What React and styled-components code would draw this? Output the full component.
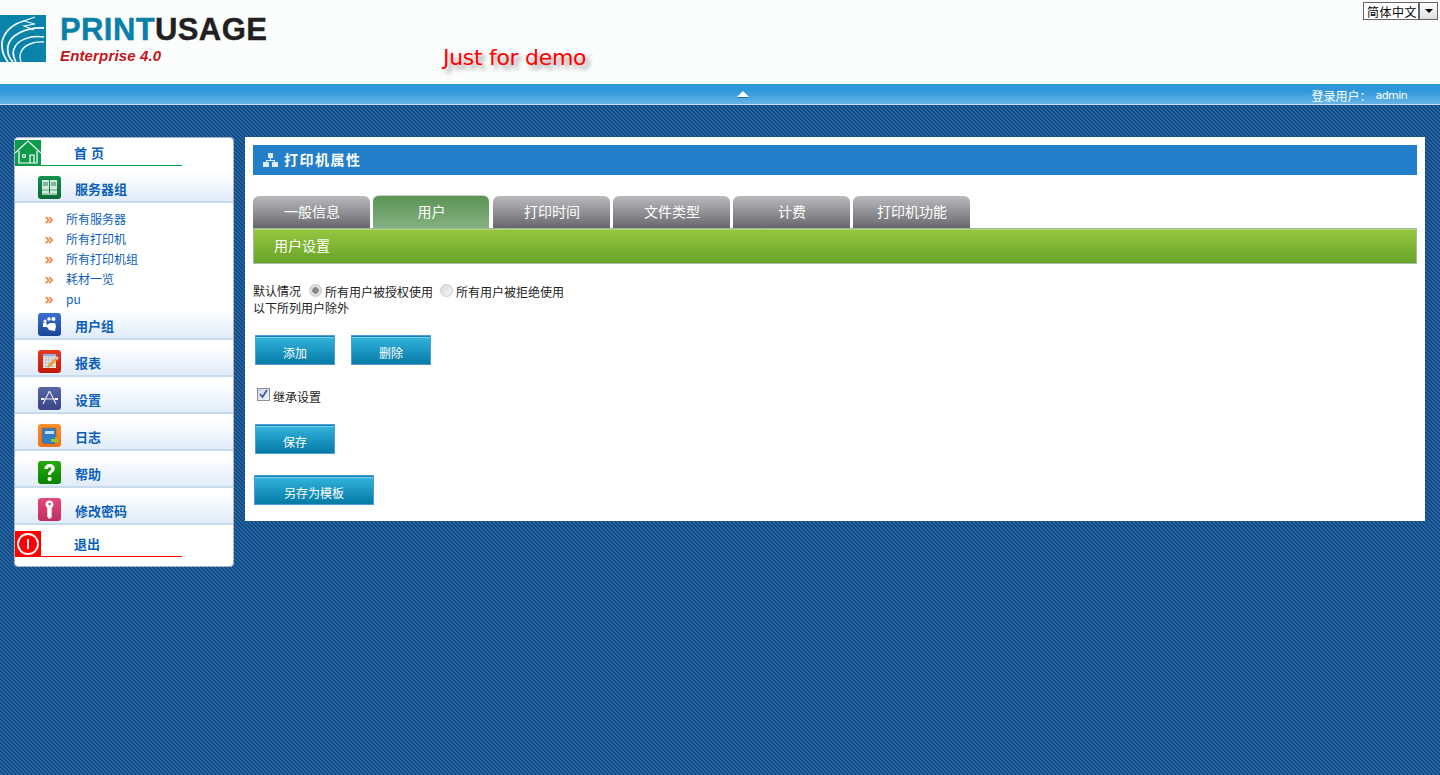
import React from "react";
import styled, { createGlobalStyle } from "styled-components";

const Global = createGlobalStyle`
  html, body { margin: 0; padding: 0; height: 100%; }
  body {
    min-height: 775px;
    overflow: hidden;
    font-family: "Noto Sans CJK SC", "Liberation Sans", sans-serif;
    font-size: 12px;
    background-color: #14508c;
    background-image: linear-gradient(45deg, #0f4a86 25%, #2a659f 25%, #2a659f 50%, #0f4a86 50%, #0f4a86 75%, #2a659f 75%);
    background-size: 4px 4px;
  }
`;

const Page = styled.div`width: 1440px; height: 775px; overflow: hidden;`;

const Header = styled.header`
  position: relative;
  height: 84px;
  background: #fbfdfc;
  display: flex;
`;
const LogoMark = styled.svg`width: 46px; height: 47px; margin-top: 15px; flex: none;`;
const LogoText = styled.div`margin: 11px 0 0 14px; width: 383px; flex: none;`;
const Brand = styled.div`
  font: bold 31px/38px "Liberation Sans", sans-serif;
  letter-spacing: 0.4px;
  -webkit-text-stroke: 0.4px currentColor;
  color: #231f20;
  span { color: #0a7fa8; }
`;
const Edition = styled.div`
  font: italic bold 15px/17px "Liberation Sans", sans-serif;
  letter-spacing: 0.15px;
  color: #c4151b;
  margin-top: -2px;
`;
const Demo = styled.div`
  margin-top: 44px;
  font: 22px/28px "DejaVu Sans", sans-serif;
  letter-spacing: -0.3px;
  color: #ff0000;
  text-shadow: 4px 4px 4px #999;
`;
const LangSelect = styled.div`
  position: absolute;
  top: 2px; right: 2px;
  width: 75px; height: 18px;
  box-sizing: border-box;
  border: 1px solid #666;
  background: #fff;
  display: flex;
  font-size: 12px;
  letter-spacing: 0.5px;
  line-height: 17px;
  color: #000;
  padding-left: 3px;
  justify-content: space-between;
  white-space: nowrap;
`;
const LangArrow = styled.span`
  width: 17px;
  border-left: 2px solid #666;
  background: linear-gradient(#fff, #ddd);
  display: flex; align-items: center; justify-content: center;
  &::after { content: ""; border: 4px solid transparent; border-top: 4px solid #000; border-bottom: 0; }
`;

const TopBar = styled.div`
  position: relative;
  height: 21px;
  box-sizing: border-box;
  background: linear-gradient(#2e97da 0, #2e97da 30%, #66b3e6 95%, #c3def2 95%);
  display: flex;
  align-items: center;
  justify-content: flex-end;
  padding-right: 33px;
  color: #fff;
  font-size: 12px;
`;
const Collapse = styled.span`
  position: absolute; left: 737px; top: 7px;
  border: 6px solid transparent;
  border-top: 0;
  border-bottom: 6px solid #fff;
  filter: drop-shadow(0 1px 0 #2a6d9c);
`;
const Admin = styled.span`font-family: "DejaVu Sans", sans-serif; font-size: 11px; margin-left: 4px; letter-spacing: -.6px;`;
const UserInfo = styled.div`margin-top: 3px; line-height: 16px; display: flex;`;

const Body = styled.div`
  display: flex;
  align-items: flex-start;
  gap: 11px;
  padding: 32px 15px 0 14px;
`;

const Sidebar = styled.nav`
  width: 220px;
  height: 430px;
  box-sizing: border-box;
  flex: none;
  background: #fff;
  border: 1px solid #a9b4bd;
  border-radius: 4px;
  padding-top: 2px;
`;
const Feature = styled.div`
  display: flex;
  height: ${p => p.$h}px;
  margin-top: ${p => p.$mt || 0}px;
`;
const FeatureIcon = styled.div`
  width: 26px; height: 26px; flex: none;
  background: ${p => p.$c};
  display: flex; align-items: center; justify-content: center;
`;
const FeatureLabel = styled.div`
  width: 141px; height: 26px;
  box-sizing: border-box;
  border-bottom: 1px solid ${p => p.$c};
  padding-left: 33px;
  font-weight: 700;
  font-size: 13px;
  line-height: 25px;
  color: #0c5fb8;
  letter-spacing: ${p => p.$ls || 0}px;
  white-space: pre;
`;
const Group = styled.div`
  margin-top: 6px;
  height: 31px;
  box-sizing: border-box;
  background: linear-gradient(#fff, #e0ecf9);
  border-bottom: 2px solid #c6dcec;
  display: flex;
  align-items: flex-start;
  padding: 4px 0 0 23px;
`;
const GroupIcon = styled.div`
  width: 23px; height: 23px; flex: none;
  border-radius: 3px;
  overflow: hidden;
  background: linear-gradient(${p => p.$a}, ${p => p.$b});
  svg { display: block; }
`;
const GroupLabel = styled.div`
  margin-left: 14px;
  padding-top: 2px;
  font-size: 13px;
  font-weight: 700;
  line-height: 22px;
  color: #0c5fb8;
`;
const SubList = styled.ul`
  list-style: none;
  margin: 0;
  padding: 6px 0 0 30px;
  height: 100px;
  box-sizing: border-box;
`;
const SubItem = styled.li`
  height: 20px;
  display: flex;
  align-items: center;
  color: #0c5fb8;
  line-height: 20px;
  font-size: 12px;
  &::before {
    content: "»";
    width: 21px;
    color: #f26b1d;
    font: 15px/18px "Liberation Sans", sans-serif;
    -webkit-text-stroke: 0.3px #f26b1d;
  }
`;

const Panel = styled.main`
  width: 1180px;
  height: 384px;
  box-sizing: border-box;
  flex: none;
  background: #fff;
  padding: 8px 8px 0;
`;
const Title = styled.h1`
  margin: 0;
  height: 30px;
  box-sizing: border-box;
  background: #237fc9;
  color: #fff;
  font-size: 14px;
  font-weight: 700;
  line-height: 28px;
  letter-spacing: 1.5px;
  display: flex;
  align-items: center;
  gap: 6px;
  padding: 0 0 2px 10px;
  svg { margin-top: 2px; }
`;
const Tabs = styled.div`
  display: flex;
  gap: 3px;
  margin-top: 20px;
  height: 33px;
  align-items: flex-end;
`;
const Tab = styled.div`
  width: ${p => (p.$active ? 116 : 117)}px;
  margin-right: ${p => (p.$active ? 1 : 0)}px;
  height: ${p => (p.$active ? 33 : 32)}px;
  box-sizing: border-box;
  border-radius: 6px 6px 0 0;
  text-align: center;
  color: #fff;
  font-size: 14px;
  line-height: 30px;
  padding-left: 1px;
  background: ${p => p.$active ? "linear-gradient(#5b9455, #85b182)" : "linear-gradient(#b9b9be, #68686c)"};
  border-top: ${p => p.$active ? "1px solid #c8d2c6" : "0"};
`;
const SubBar = styled.div`
  height: 36px;
  box-sizing: border-box;
  border: 1px solid #a9b5ae;
  border-top: 1px solid #9db5a0;
  box-shadow: inset 0 1px 0 #b6d96f;
  background: linear-gradient(#97c63f, #68a428);
  color: #fff;
  font-size: 14px;
  line-height: 32px;
  padding-left: 20px;
`;
const Form = styled.div`padding-top: 17px;`;
const DefaultRow = styled.div`
  display: flex;
  align-items: center;
  height: 18px;
  line-height: 17px;
  color: #222;
  font-size: 12px;
`;
const Radio = styled.span`
  width: 13px; height: 13px;
  border-radius: 50%;
  margin: 0 3px 0 ${p => p.$ml}px;
  box-sizing: border-box;
  border: 1px solid #c9c9c9;
  background: ${p => p.$on
    ? "radial-gradient(circle, #888 0 3px, #e4e4e4 3.5px, #cfcfcf 100%)"
    : "linear-gradient(135deg, #d8d8d8, #f6f6f6)"};
`;
const RadioText = styled.span`padding-top: 3px;`;
const Note = styled.div`line-height: 17px; color: #222; font-size: 12px;`;
const ButtonRow = styled.div`
  display: flex;
  gap: 16px;
  padding-left: ${p => p.$pl}px;
  margin-top: ${p => p.$mt}px;
`;
const Button = styled.button`
  width: ${p => p.$w || 80}px;
  height: 30px;
  padding: 5px 0 0;
  box-sizing: border-box;
  border: 1px solid #4f9bdc;
  box-shadow: inset 0 1px 0 #0f83ad, inset 0 2px 0 #7fd2ee;
  background: linear-gradient(#35b6df, #047aa5);
  color: #fff;
  font: 12px/20px "Noto Sans CJK SC", sans-serif;
`;
const CheckRow = styled.div`
  display: flex;
  align-items: center;
  margin: 20px 0 0 4px;
  height: 18px;
  color: #222;
  gap: 3px;
`;
const CheckText = styled.span`padding-top: 5px;`;
const Check = styled.span`
  width: 13px; height: 13px;
  box-sizing: border-box;
  border: 1px solid #8f8f9d;
  background: linear-gradient(135deg, #d5d5e0, #f4f4f8);
  display: flex;
  svg { display: block; }
`;

const icons = {
  server: <svg width="23" height="23" viewBox="0 0 23 23"><path d="M4 4h7v13H4zM12 4h7v13h-7z" fill="#d6e8dc"/><path d="M5 7h5M5 9h5M13 7h5M13 9h5" stroke="#1d8a52"/><path d="M4 14h7M12 14h7" stroke="#4fa876"/><path d="M4 17h15v2H4z" fill="#9fc9ae"/></svg>,
  users: <svg width="23" height="23" viewBox="0 0 23 23"><g fill="#fff"><circle cx="7" cy="8" r="1.6"/><circle cx="11" cy="6" r="1.8"/><circle cx="15.5" cy="6" r="2"/><path d="M5 10l3-1 1 3 3-2 5 0 1 3-1 5-6-1-2-3-4 0z"/></g></svg>,
  report: <svg width="23" height="23" viewBox="0 0 23 23"><path d="M5 4h13v14H5z" fill="#f3efdc"/><path d="M5 7h13M5 10h13M5 13h13M5 16h13M8 4v14M11 4v14M14 4v14" stroke="#9bb6d6" strokeWidth=".7"/><path d="M5 4h13v2H5z" fill="#8fb2dd"/><path d="M9 18l1-3 8-8 2 2-8 8z" fill="#f0a030"/><path d="M17 8l2-2 2 2-2 2z" fill="#d9c0d0"/></svg>,
  settings: <svg width="23" height="23" viewBox="0 0 23 23"><path d="M11.5 4L5 17M11.5 4L18 17M4 12h15" stroke="#dfe4f2" strokeWidth="1.2" fill="none"/><path d="M3 11h3v2H3zM17 11h3v2h-3z" fill="#fff"/></svg>,
  log: <svg width="23" height="23" viewBox="0 0 23 23"><path d="M4 4h14v16H6l-2-2z" fill="#2f7fc8" stroke="#c75b10" strokeWidth=".6"/><path d="M7 7h9v3H7z" fill="#bfe0f4"/><path d="M13 15h4v-2l4 3.5-4 3.500v-2h-4z" fill="#9cc428"/></svg>,
  help: <svg width="23" height="23" viewBox="0 0 23 23"><path d="M6.500 8c0-3 2.300-5 5.200-5s5 1.800 5 4.400c0 2-1.100 3-2.400 4-1 .8-1.400 1.300-1.400 2.600H10c0-2.200.6-3.200 2-4.300.9-.7 1.300-1.200 1.300-2 0-.9-.7-1.500-1.700-1.500S9.900 6.900 9.800 8z" fill="#fff"/><circle cx="11.600" cy="18" r="2.100" fill="#fff"/></svg>,
  key: <svg width="23" height="23" viewBox="0 0 23 23"><path d="M11.500 2.500a4 4 0 0 1 2.200 7.300V19l-1.200 1.500h-2L9.300 19V9.800a4 4 0 0 1 2.200-7.300z" fill="#fff"/><circle cx="11.500" cy="6" r="1.200" fill="#d0396f"/></svg>,
};

const rows = [
  ["report", "#e83a22", "#c21a0a", "报表"],
  ["settings", "#5565a5", "#3a4488", "设置"],
  ["log", "#fb8f2c", "#f2701a", "日志"],
  ["help", "#22ab08", "#0d8200", "帮助"],
  ["key", "#e6487c", "#bf2f60", "修改密码"],
];

export default function App() {
  return (
    <Page>
      <Global />
      <Header>
        <LogoMark viewBox="0 0 46 47">
          <rect width="46" height="47" fill="#0a83ab" />
          <path d="M35 2L24 6l11 3-11 2 10 4" fill="none" stroke="#eef8fb" strokeWidth="1.2" />
          <path d="M24 6C12 9 3 18 2 28c-.5 7 2 14 6 19" fill="none" stroke="#f2fafc" strokeWidth="1.800" />
          <path d="M44 13C26 12 10 20 8 31c-1 6 1 12 5 16" fill="none" stroke="#f2fafc" strokeWidth="1.800" />
          <path d="M44 22C30 20 17 25 14 34c-2 5 0 9 2 13" fill="none" stroke="#f2fafc" strokeWidth="1.600" />
          <path d="M44 27C34 26 24 30 21 37c-2 4-1 7 0 10" fill="none" stroke="#f2fafc" strokeWidth="1.400" />
        </LogoMark>
        <LogoText>
          <Brand><span>PRINT</span>USAGE</Brand>
          <Edition>Enterprise 4.0</Edition>
        </LogoText>
        <Demo>Just for demo</Demo>
        <LangSelect>简体中文<LangArrow /></LangSelect>
      </Header>
      <TopBar>
        <Collapse />
        <UserInfo>登录用户：<Admin>admin</Admin></UserInfo>
      </TopBar>
      <Body>
        <Sidebar>
          <Feature $h={26} $mt={0}>
            <FeatureIcon $c="#0b9b4b">
              <svg width="26" height="26" viewBox="0 0 26 26" fill="none" stroke="#fff" strokeWidth="1.200"><path d="M0 13L13 1l13 12" /><path d="M4 11v12h18V11" /><path d="M15 23v-8h4v8" /><circle cx="9" cy="16" r="1.500" /></svg>
            </FeatureIcon>
            <FeatureLabel $c="#0b9b4b" $ls={0.5}>首 页</FeatureLabel>
          </Feature>
          <Group>
            <GroupIcon $a="#14904e" $b="#066a34">{icons.server}</GroupIcon>
            <GroupLabel>服务器组</GroupLabel>
          </Group>
          <SubList>
            <SubItem>所有服务器</SubItem>
            <SubItem>所有打印机</SubItem>
            <SubItem>所有打印机组</SubItem>
            <SubItem>耗材一览</SubItem>
            <SubItem>pu</SubItem>
          </SubList>
          <Group>
            <GroupIcon $a="#3a6fd0" $b="#1d4698">{icons.users}</GroupIcon>
            <GroupLabel>用户组</GroupLabel>
          </Group>
          {rows.map(([k, a, b, label]) => (
            <Group key={k}>
              <GroupIcon $a={a} $b={b}>{icons[k]}</GroupIcon>
              <GroupLabel>{label}</GroupLabel>
            </Group>
          ))}
          <Feature $h={26} $mt={6}>
            <FeatureIcon $c="#ff0000">
              <svg width="26" height="26" viewBox="0 0 26 26" fill="none" stroke="#fff" strokeWidth="1.800"><circle cx="13" cy="13" r="10" /><path d="M13 8v10" /></svg>
            </FeatureIcon>
            <FeatureLabel $c="#ff0000">退出</FeatureLabel>
          </Feature>
        </Sidebar>
        <Panel>
          <Title>
            <svg width="15" height="14" viewBox="0 0 15 14" fill="#dcecfa"><path d="M5 0h5v5H5zM0 9h6v5H0zM9 9h6v5H9z" /><path d="M7 5h1v2h4v2h-1V8H4v1H3V7h4z" /></svg>
            打印机属性
          </Title>
          <Tabs>
            <Tab>一般信息</Tab>
            <Tab $active>用户</Tab>
            <Tab>打印时间</Tab>
            <Tab>文件类型</Tab>
            <Tab>计费</Tab>
            <Tab>打印机功能</Tab>
          </Tabs>
          <SubBar>用户设置</SubBar>
          <Form>
            <DefaultRow>
              默认情况
              <Radio $on $ml={8} />
              <RadioText>所有用户被授权使用</RadioText>
              <Radio $ml={7} />
              <RadioText>所有用户被拒绝使用</RadioText>
            </DefaultRow>
            <Note>以下所列用户除外</Note>
            <ButtonRow $pl={2} $mt={19}>
              <Button>添加</Button>
              <Button>删除</Button>
            </ButtonRow>
            <CheckRow>
              <Check><svg width="11" height="11" viewBox="0 0 11 11"><path d="M2 5l2.500 3L9 1" fill="none" stroke="#3f5aa8" strokeWidth="1.800" /></svg></Check>
              <CheckText>继承设置</CheckText>
            </CheckRow>
            <ButtonRow $pl={2} $mt={21}>
              <Button>保存</Button>
            </ButtonRow>
            <ButtonRow $pl={1} $mt={21}>
              <Button $w={120}>另存为模板</Button>
            </ButtonRow>
          </Form>
        </Panel>
      </Body>
    </Page>
  );
}
